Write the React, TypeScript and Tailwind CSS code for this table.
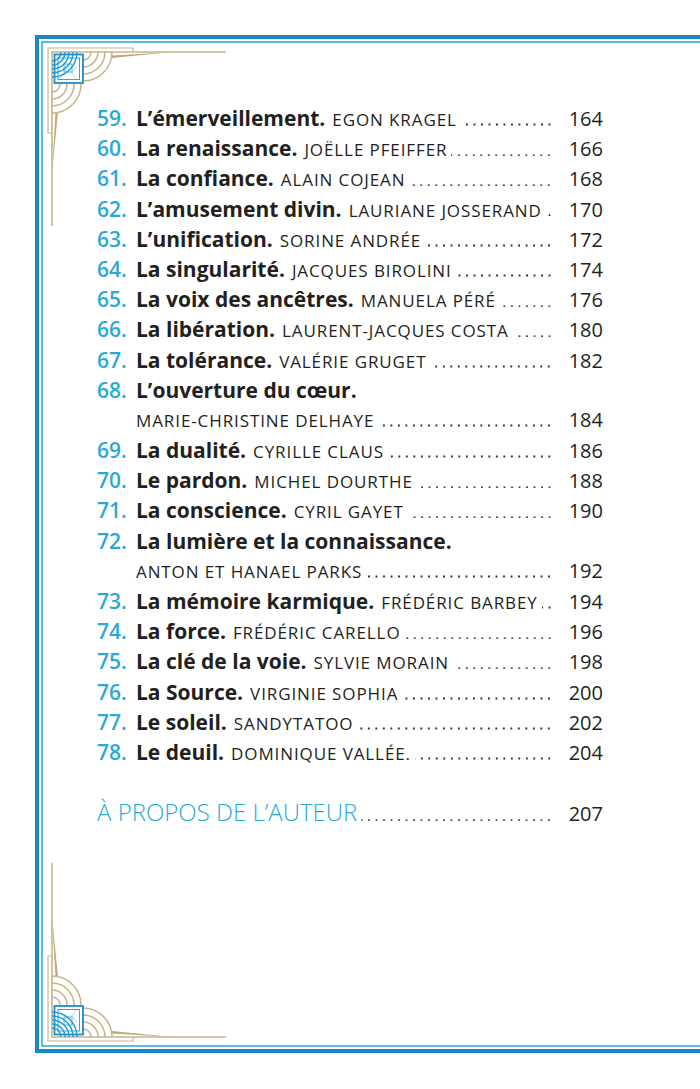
import React from "react"

type Entry = {
  num: string
  title: string
  author: string
  page: string
  split?: boolean
}

const entries: Entry[] = [
  { num: "59.", title: "L’émerveillement.", author: "EGON KRAGEL", page: "164" },
  { num: "60.", title: "La renaissance.", author: "JOËLLE PFEIFFER", page: "166" },
  { num: "61.", title: "La confiance.", author: "ALAIN COJEAN", page: "168" },
  { num: "62.", title: "L’amusement divin.", author: "LAURIANE JOSSERAND", page: "170" },
  { num: "63.", title: "L’unification.", author: "SORINE ANDRÉE", page: "172" },
  { num: "64.", title: "La singularité.", author: "JACQUES BIROLINI", page: "174" },
  { num: "65.", title: "La voix des ancêtres.", author: "MANUELA PÉRÉ", page: "176" },
  { num: "66.", title: "La libération.", author: "LAURENT-JACQUES COSTA", page: "180" },
  { num: "67.", title: "La tolérance.", author: "VALÉRIE GRUGET", page: "182" },
  { num: "68.", title: "L’ouverture du cœur.", author: "MARIE-CHRISTINE DELHAYE", page: "184", split: true },
  { num: "69.", title: "La dualité.", author: "CYRILLE CLAUS", page: "186" },
  { num: "70.", title: "Le pardon.", author: "MICHEL DOURTHE", page: "188" },
  { num: "71.", title: "La conscience.", author: "CYRIL GAYET", page: "190" },
  { num: "72.", title: "La lumière et la connaissance.", author: "ANTON ET HANAEL PARKS", page: "192", split: true },
  { num: "73.", title: "La mémoire karmique.", author: "FRÉDÉRIC BARBEY", page: "194" },
  { num: "74.", title: "La force.", author: "FRÉDÉRIC CARELLO", page: "196" },
  { num: "75.", title: "La clé de la voie.", author: "SYLVIE MORAIN", page: "198" },
  { num: "76.", title: "La Source.", author: "VIRGINIE SOPHIA", page: "200" },
  { num: "77.", title: "Le soleil.", author: "SANDYTATOO", page: "202" },
  { num: "78.", title: "Le deuil.", author: "DOMINIQUE VALLÉE.", page: "204" },
]

// dotted leader drawn as a repeating background so it always ends flush at the page column
function Leader() {
  return (
    <span className="ml-[4px] mr-[4px] inline-block h-[2.6px] min-w-0 flex-1 bg-[radial-gradient(circle,#3a3536_0.8px,transparent_1.2px)] bg-[length:7.5px_2.6px] bg-right bg-repeat-x" />
  )
}

function PageNum({ page }: { page: string }) {
  return <span className="w-[46px] shrink-0 text-right text-[20px] text-[#231f20]">{page}</span>
}

function Row({ e }: { e: Entry }) {
  const num = <span className="w-[39px] shrink-0 text-[21px] font-semibold text-[#29a9d6]">{e.num}</span>
  const author = (
    <span className="whitespace-nowrap text-[17px] tracking-[0.9px] text-[#231f20]">{e.author}</span>
  )
  if (e.split) {
    return (
      <>
        <div className="flex h-[30.2px] items-baseline">
          {num}
          <span className="whitespace-nowrap text-[21px] font-bold text-[#231f20]">{e.title}</span>
        </div>
        <div className="flex h-[30.2px] items-baseline pl-[39px]">
          {author}
          <Leader />
          <PageNum page={e.page} />
        </div>
      </>
    )
  }
  return (
    <div className="flex h-[30.2px] items-baseline">
      {num}
      <span className="mr-[7px] whitespace-nowrap text-[21px] font-bold text-[#231f20]">{e.title}</span>
      {author}
      <Leader />
      <PageNum page={e.page} />
    </div>
  )
}

function Ornament({ flip }: { flip?: boolean }) {
  const gold = "#c8b48a"
  return (
    <svg
      width="240"
      height="240"
      viewBox="0 0 240 240"
      className={flip ? "absolute bottom-[0px] left-0 -scale-y-100" : "absolute left-0 top-0"}
      fill="none"
    >
      {/* frame lines */}
      <path d="M52 226 V52 H226" stroke={gold} strokeWidth="1.6" />
      <path d="M52 133 H48 V48 H133 V52" stroke={gold} strokeWidth="1.2" />
      <polygon points="112,55.5 172,52 112,58" fill="#bea77d" />
      <polygon points="55.5,112 52,172 58,112" fill="#bea77d" />
      {/* fans */}
      {[8, 15, 22, 29].map((r) => (
        <path key={"a" + r} d={`M83 ${52 + r} A${r} ${r} 0 0 0 ${83 + r} 52`} stroke={gold} strokeWidth="1.5" />
      ))}
      {[8, 15, 22, 29].map((r) => (
        <path key={"b" + r} d={`M52 ${84 + r} A${r} ${r} 0 0 0 ${52 + r} 84`} stroke={gold} strokeWidth="1.5" />
      ))}
      {/* blue tile */}
      <rect x="54.5" y="54.5" width="28.5" height="28.5" fill="white" stroke="#1b8cc8" strokeWidth="1.8" />
      <rect x="58" y="58" width="21.5" height="21.5" stroke="#2fa6d8" strokeWidth="1" />
      <rect x="64" y="64" width="8" height="8" stroke="#4db7e0" strokeWidth="1" />
      <path d="M60 77 L66 72 L72 73 L77 67 M66 72 L64 64 M72 73 L76 79" stroke="#8fd3ee" strokeWidth="0.8" />
      {[9, 13, 17, 21, 25].map((r) => (
        <path key={"c" + r} d={`M52 ${52 + r} A${r} ${r} 0 0 0 ${52 + r} 52`} stroke="#1e9bd3" strokeWidth="1.4" />
      ))}
    </svg>
  )
}

export default function App() {
  return (
    <div className="relative h-[1089px] w-[700px] overflow-hidden bg-white font-['Open_Sans',sans-serif]">
      <div className="ml-[35px] mt-[35px] h-[1018px] w-[700px] border-4 border-r-0 border-[#1689c6] p-[2px] pr-0">
        <div className="h-full border-2 border-r-0 border-[#5cbbe1] pl-[54px] pt-[60px]">
          <div className="flex w-[506px] flex-col">
            {entries.map((e) => (
              <Row key={e.num} e={e} />
            ))}
            <div className="mt-[27px] flex h-[30.2px] items-baseline">
              <span className="whitespace-nowrap text-[24px] font-light text-[#29a9d6]">À PROPOS DE L’AUTEUR</span>
              <Leader />
              <PageNum page="207" />
            </div>
          </div>
        </div>
      </div>
      <Ornament />
      <Ornament flip />
    </div>
  )
}
